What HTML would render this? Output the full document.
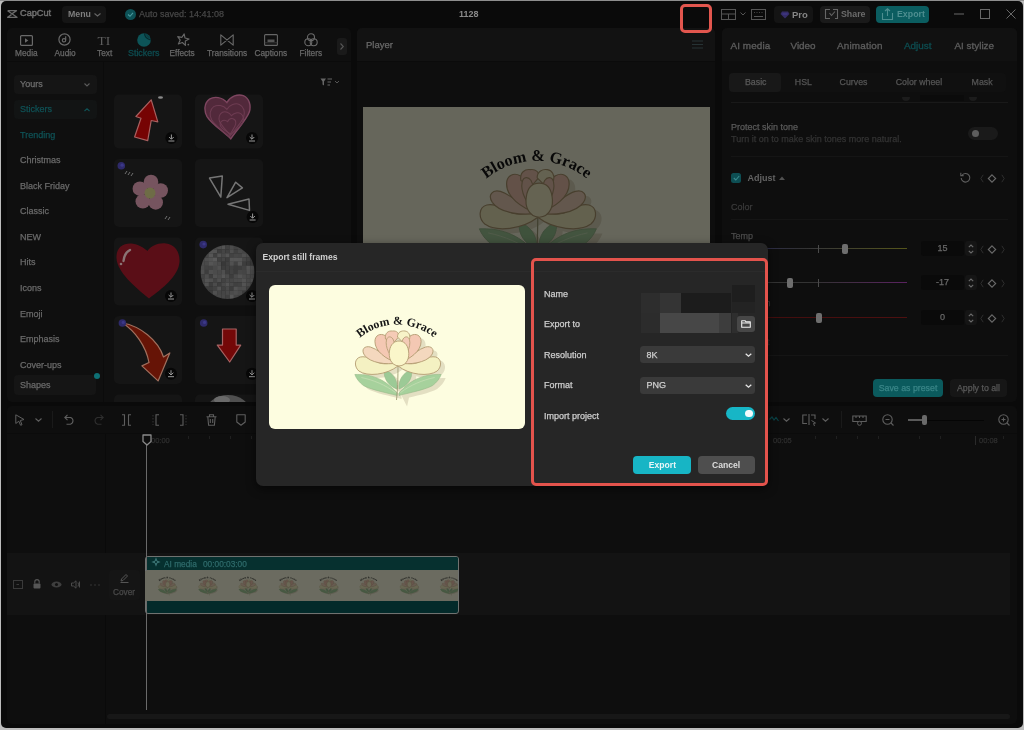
<!DOCTYPE html>
<html><head><meta charset="utf-8">
<style>
*{margin:0;padding:0;box-sizing:border-box}
html,body{width:1024px;height:730px;overflow:hidden;background:#bdbdbd;font-family:"Liberation Sans",sans-serif;position:relative}
.a{position:absolute}
#win{position:absolute;left:1px;top:1px;width:1022px;height:727px;background:#0a0a0a;border-radius:5px;overflow:hidden}
.panel{position:absolute;background:#0f0f0f;border-radius:5px;overflow:hidden}
.t{position:absolute;white-space:nowrap;line-height:1;-webkit-text-stroke:0.25px currentColor}
svg{position:absolute;overflow:visible}
</style></head><body><div id="root" style="position:absolute;left:0;top:0;width:1024px;height:730px;will-change:transform;background:#bdbdbd">
<div class="a" style="left:0;top:0;width:1024px;height:1px;background:#8e8e8e"></div><div id="win"></div>

<!-- TOPBAR -->
<div id="top">
 <svg style="left:7px;top:10px" width="11" height="8" viewBox="0 0 11 8"><path d="M0.6 0.7 L9.5 0.7 L5.5 3.4 M0.6 0.7 L10 7.3 L0.6 7.3 L4.5 4.6" stroke="#6a6a6a" stroke-width="1.3" fill="none" stroke-linejoin="round"/></svg>
 <div class="t" style="left:20px;top:8.7px;font-size:9.2px;color:#707070;-webkit-text-stroke:0.45px #707070">CapCut</div>
 <div class="a" style="left:62px;top:6px;width:44px;height:17px;background:#151515;border-radius:4px"></div>
 <div class="t" style="left:68px;top:10px;font-size:8.8px;font-weight:bold;color:#7e7e7e;-webkit-text-stroke:0">Menu</div>
 <svg style="left:94px;top:13px" width="7" height="4" viewBox="0 0 7 4"><path d="M0.5 0.5 L3.5 3 L6.5 0.5" stroke="#666" stroke-width="1.1" fill="none"/></svg>
 <div class="a" style="left:125px;top:9px;width:11px;height:11px;border-radius:50%;background:#0d5257"></div>
 <svg style="left:127px;top:11px" width="7" height="7" viewBox="0 0 7 7"><path d="M1 3.5 L3 5.3 L6 1.8" stroke="#4a9a9e" stroke-width="1.1" fill="none"/></svg>
 <div class="t" style="left:139px;top:10px;font-size:9px;color:#474747">Auto saved: 14:41:08</div>
 <div class="t" style="left:459px;top:10px;font-size:9px;font-weight:bold;color:#8a8a8a;-webkit-text-stroke:0">1128</div>
 <div class="a" style="left:680px;top:4px;width:32px;height:29px;border:3px solid #e2564e;border-radius:5px;z-index:10"></div>
 <svg style="left:721px;top:9px" width="15" height="11" viewBox="0 0 15 11"><rect x="0.5" y="0.5" width="14" height="10" stroke="#555" fill="none"/><path d="M0.5 5 H14.5 M7.5 5 V10.5" stroke="#555" fill="none"/></svg>
 <svg style="left:740px;top:12px" width="6" height="4" viewBox="0 0 6 4"><path d="M0.5 0.5 L3 3 L5.5 0.5" stroke="#555" stroke-width="1" fill="none"/></svg>
 <svg style="left:751px;top:9px" width="15" height="11" viewBox="0 0 15 11"><rect x="0.5" y="0.5" width="14" height="10" stroke="#555" fill="none"/><path d="M3 7.5 H12" stroke="#555" fill="none"/><path d="M3 3.5 H4 M5.5 3.5 H6.5 M8 3.5 H9 M10.5 3.5 H11.5" stroke="#444" fill="none"/></svg>
 <div class="a" style="left:774px;top:6px;width:39px;height:17px;background:#141414;border-radius:4px"></div>
 <svg style="left:780px;top:10.5px" width="10" height="8" viewBox="0 0 10 8"><path d="M2 0.5 H8 L9.5 3 L5 7.5 L0.5 3Z" fill="#342c66"/><path d="M2.5 3 H7.5" stroke="#4a40a0" stroke-width="0.8"/></svg>
 <div class="t" style="left:792px;top:10px;font-size:9.5px;font-weight:bold;color:#858585;-webkit-text-stroke:0">Pro</div>
 <div class="a" style="left:820px;top:6px;width:50px;height:17px;background:#1a1a1a;border-radius:4px"></div>
 <svg style="left:825px;top:9px" width="13" height="11" viewBox="0 0 13 11"><path d="M5 0.5 H0.5 V9.5 H5 M8 0.5 H12.5 V9.5 H10" stroke="#666" stroke-width="1.1" fill="none"/><path d="M4.5 4 L6.5 6.5 L10 2.5" stroke="#666" stroke-width="1.1" fill="none"/></svg>
 <div class="t" style="left:841px;top:10px;font-size:8.8px;font-weight:bold;color:#6c6c6c;-webkit-text-stroke:0">Share</div>
 <div class="a" style="left:876px;top:6px;width:53px;height:17px;background:#0b5d60;border-radius:4px"></div>
 <svg style="left:882px;top:8px" width="11" height="12" viewBox="0 0 11 12"><path d="M0.5 5 V11.5 H10.5 V5 M5.5 8 V0.8 M3 3 L5.5 0.8 L8 3" stroke="#4e8e90" stroke-width="1.1" fill="none"/></svg>
 <div class="t" style="left:897px;top:10px;font-size:8.8px;font-weight:bold;color:#4e8e90;-webkit-text-stroke:0">Export</div>
 <svg style="left:954px;top:13px" width="10" height="2" viewBox="0 0 10 2"><path d="M0 1 H10" stroke="#686868" stroke-width="1"/></svg>
 <svg style="left:980px;top:9px" width="10" height="10" viewBox="0 0 10 10"><rect x="0.5" y="0.5" width="9" height="9" stroke="#686868" stroke-width="1" fill="none"/></svg>
 <svg style="left:1006px;top:9px" width="10" height="10" viewBox="0 0 10 10"><path d="M0.5 0.5 L9.5 9.5 M9.5 0.5 L0.5 9.5" stroke="#686868" stroke-width="1"/></svg>
</div>

<!-- LEFT PANEL -->
<div class="panel" style="left:7px;top:28px;width:344px;height:374px">
 <!-- tabs -->
 <svg style="left:13px;top:7px" width="13" height="11" viewBox="0 0 13 11"><rect x="0.6" y="0.6" width="11.8" height="9.8" rx="1" stroke="#6a6a6a" stroke-width="1.2" fill="none"/><path d="M5 3.2 L8.3 5.5 L5 7.8Z" fill="#6a6a6a"/></svg>
 <div class="t" style="left:8px;top:21px;font-size:8.3px;color:#686868">Media</div>
 <svg style="left:51px;top:5px" width="13" height="13" viewBox="0 0 13 13"><circle cx="6.5" cy="6.5" r="5.6" stroke="#6a6a6a" stroke-width="1.2" fill="none"/><circle cx="6" cy="7.3" r="1.7" stroke="#6a6a6a" stroke-width="1.1" fill="none"/><path d="M7.7 7.3 V3.2" stroke="#6a6a6a" stroke-width="1.1"/></svg>
 <div class="t" style="left:47.5px;top:21px;font-size:8.3px;color:#686868">Audio</div>
 <div class="t" style="left:90.5px;top:6px;font-size:13.5px;font-family:'Liberation Serif',serif;color:#5e5e5e;-webkit-text-stroke:0">TI</div>
 <div class="t" style="left:90px;top:21px;font-size:8.3px;color:#686868">Text</div>
 <svg style="left:130px;top:5px" width="14" height="14" viewBox="0 0 14 14"><circle cx="7" cy="7" r="6.8" fill="#0d5458"/><path d="M7.5 0.3 Q8 6 13.8 6.8" stroke="#062a2d" stroke-width="1.3" fill="none"/><path d="M8.5 0.8 Q9.5 5 13.3 5.5 A6.8 6.8 0 0 0 8.5 0.8Z" fill="#0a4044"/></svg>
 <div class="t" style="left:121px;top:20.5px;font-size:8.9px;color:#0d4a4e;-webkit-text-stroke:0.35px #0d4a4e">Stickers</div>
 <svg style="left:169px;top:5px" width="14" height="13" viewBox="0 0 14 13"><g transform="rotate(12 7 6.5)"><path d="M7 0.8 L8.6 4.6 L12.8 4.8 L9.6 7.6 L10.6 11.8 L7 9.6 L3.4 11.8 L4.4 7.6 L1.2 4.8 L5.4 4.6Z" stroke="#666" stroke-width="1.15" fill="none" stroke-linejoin="round"/></g><circle cx="12.3" cy="11.6" r="0.9" fill="#666"/></svg>
 <div class="t" style="left:162.5px;top:21px;font-size:8.3px;color:#686868">Effects</div>
 <svg style="left:213px;top:6px" width="14" height="12" viewBox="0 0 14 12"><path d="M0.8 0.8 L13.2 11.2 V0.8 L0.8 11.2Z" stroke="#6a6a6a" stroke-width="1.1" fill="none" stroke-linejoin="round"/></svg>
 <div class="t" style="left:200px;top:21px;font-size:8.3px;color:#686868">Transitions</div>
 <svg style="left:257px;top:6px" width="14" height="12" viewBox="0 0 14 12"><rect x="0.6" y="0.6" width="12.8" height="10.8" rx="1" stroke="#666" stroke-width="1.1" fill="none"/><rect x="3.5" y="5.5" width="7" height="2.5" fill="#555"/><path d="M0.6 8.8 H13.4" stroke="#444" stroke-width="0.8"/></svg>
 <div class="t" style="left:247.5px;top:21px;font-size:8.3px;color:#686868">Captions</div>
 <svg style="left:297px;top:5px" width="14" height="14" viewBox="0 0 14 14"><circle cx="7" cy="4.3" r="3.5" stroke="#6a6a6a" stroke-width="1.1" fill="none"/><circle cx="4.3" cy="9.2" r="3.5" stroke="#6a6a6a" stroke-width="1.1" fill="none"/><circle cx="9.7" cy="9.2" r="3.5" stroke="#6a6a6a" stroke-width="1.1" fill="none"/></svg>
 <div class="t" style="left:292.5px;top:21px;font-size:8.3px;color:#686868">Filters</div>
 <div class="a" style="left:330px;top:10px;width:10px;height:17px;background:#1a1a1a;border-radius:3px"></div>
 <svg style="left:333px;top:15px" width="4" height="7" viewBox="0 0 4 7"><path d="M0.5 0.5 L3.3 3.5 L0.5 6.5" stroke="#555" stroke-width="1.1" fill="none"/></svg>
 <div class="a" style="left:0;top:33px;width:344px;height:1px;background:#0b0b0b"></div>
 <!-- sidebar -->
 <div class="a" style="left:96px;top:34px;width:1px;height:340px;background:#0b0b0b"></div>
 <div class="a" style="left:7px;top:47px;width:83px;height:19px;background:#151515;border-radius:4px"></div>
 <div class="t" style="left:13px;top:51.5px;font-size:9px;color:#6e6e6e">Yours</div>
 <svg style="left:77px;top:55px" width="6" height="4" viewBox="0 0 6 4"><path d="M0.5 0.5 L3 3 L5.5 0.5" stroke="#5a5a5a" stroke-width="1.1" fill="none"/></svg>
 <div class="a" style="left:7px;top:72px;width:83px;height:19px;background:#121414;border-radius:4px"></div>
 <div class="t" style="left:13px;top:77px;font-size:9px;color:#0f5256">Stickers</div>
 <svg style="left:77px;top:80px" width="6" height="4" viewBox="0 0 6 4"><path d="M0.5 3 L3 0.8 L5.5 3" stroke="#0f5256" stroke-width="1.1" fill="none"/></svg>
 <div class="t" style="left:13px;top:102.5px;font-size:9px;color:#0f5256">Trending</div>
 <div class="t" style="left:13px;top:128px;font-size:9px;color:#6a6a6a">Christmas</div>
 <div class="t" style="left:13px;top:153.6px;font-size:9px;color:#6a6a6a">Black Friday</div>
 <div class="t" style="left:13px;top:179.2px;font-size:9px;color:#6a6a6a">Classic</div>
 <div class="t" style="left:13px;top:204.8px;font-size:9px;color:#6a6a6a">NEW</div>
 <div class="t" style="left:13px;top:230.4px;font-size:9px;color:#6a6a6a">Hits</div>
 <div class="t" style="left:13px;top:256px;font-size:9px;color:#6a6a6a">Icons</div>
 <div class="t" style="left:13px;top:281.6px;font-size:9px;color:#6a6a6a">Emoji</div>
 <div class="t" style="left:13px;top:307.2px;font-size:9px;color:#6a6a6a">Emphasis</div>
 <div class="a" style="left:0;top:330px;width:98px;height:14px;overflow:hidden"><div class="t" style="left:13px;top:2.8px;font-size:9px;color:#6a6a6a">Cover-ups</div></div>
 <div class="a" style="left:7px;top:347px;width:82px;height:20px;background:#151515;border-radius:4px"></div>
 <div class="t" style="left:13px;top:352.5px;font-size:9px;color:#6a6a6a">Shapes</div>
 <div class="a" style="left:87px;top:345px;width:6px;height:6px;border-radius:50%;background:#0e7074"></div>
 <!-- filter icon -->
 <svg style="left:313px;top:50px" width="20" height="8" viewBox="0 0 20 8"><path d="M0.5 0.5 H6 L4 3.5 V7.5 L2.5 6.5 V3.5Z" fill="#666"/><path d="M7.5 1 H12 M7.5 4 H11 M7.5 7 H10" stroke="#666" stroke-width="1"/><path d="M15 3 L17 5 L19 3" stroke="#555" stroke-width="1" fill="none"/></svg>
 <!-- grid -->
 </div>
<!-- GRID -->
<svg style="left:0;top:0" width="1024" height="730" viewBox="0 0 1024 730"><defs><clipPath id="sph"><circle cx="227.5" cy="272" r="27"/></clipPath><filter id="bl"><feGaussianBlur stdDeviation="0.5"/></filter><clipPath id="gc"><rect x="106" y="94" width="245" height="308"/></clipPath></defs><g clip-path="url(#gc)"><rect x="114" y="94.5" width="68" height="54" rx="5" fill="#151515"/><rect x="195" y="94.5" width="68" height="54" rx="5" fill="#151515"/><rect x="114" y="159" width="68" height="68" rx="5" fill="#151515"/><rect x="195" y="159" width="68" height="68" rx="5" fill="#151515"/><rect x="114" y="237.5" width="68" height="68" rx="5" fill="#151515"/><rect x="195" y="237.5" width="68" height="68" rx="5" fill="#151515"/><rect x="114" y="316" width="68" height="68" rx="5" fill="#151515"/><rect x="195" y="316" width="68" height="68" rx="5" fill="#151515"/><rect x="114" y="394.5" width="68" height="68" rx="5" fill="#151515"/><rect x="195" y="394.5" width="68" height="68" rx="5" fill="#151515"/><path d="M151.2 99.8 L157.8 121.8 L151.2 120.5 L147.7 140.6 L134.6 137 L141 118.3 L135.9 116.5Z" fill="#760303" stroke="#a86060" stroke-width="1.2" stroke-linejoin="round"/><ellipse cx="160.5" cy="97.5" rx="2.5" ry="1.2" fill="#8a8a8a"/><circle cx="171.4" cy="138" r="6" fill="#070707"/><path d="M171.4 134.5 V139 M169.1 137 L171.4 139.3 L173.70000000000002 137 M168.4 141 H174.4" stroke="#9a9a9a" stroke-width="1" fill="none"/><path d="M0 -29 C-5 -36 -14 -38 -20 -35 C-27 -31 -28 -22 -25 -15 C-20 -5 -8 4 0 14 C8 4 20 -5 25 -15 C28 -22 27 -31 20 -35 C14 -38 5 -36 0 -29Z" transform="translate(229.5 127) rotate(-6) scale(0.85)" fill="#52293b" stroke="#7e4660" stroke-width="1.65"/><path d="M0 -29 C-5 -36 -14 -38 -20 -35 C-27 -31 -28 -22 -25 -15 C-20 -5 -8 4 0 14 C8 4 20 -5 25 -15 C28 -22 27 -31 20 -35 C14 -38 5 -36 0 -29Z" transform="translate(228.5 128) rotate(-5) scale(0.644)" fill="none" stroke="#6e3c52" stroke-width="1.57"/><path d="M0 -29 C-5 -36 -14 -38 -20 -35 C-27 -31 -28 -22 -25 -15 C-20 -5 -8 4 0 14 C8 4 20 -5 25 -15 C28 -22 27 -31 20 -35 C14 -38 5 -36 0 -29Z" transform="translate(230.5 129) rotate(4) scale(0.460)" fill="none" stroke="#6e3c52" stroke-width="2.20"/><path d="M0 -29 C-5 -36 -14 -38 -20 -35 C-27 -31 -28 -22 -25 -15 C-20 -5 -8 4 0 14 C8 4 20 -5 25 -15 C28 -22 27 -31 20 -35 C14 -38 5 -36 0 -29Z" transform="translate(229.5 130) rotate(-13) scale(0.294)" fill="none" stroke="#6e3c52" stroke-width="3.44"/><circle cx="252" cy="138" r="6" fill="#070707"/><path d="M252 134.5 V139 M249.7 137 L252 139.3 L254.3 137 M249 141 H255" stroke="#9a9a9a" stroke-width="1" fill="none"/><circle cx="151.0" cy="182.0" r="7.3" fill="#76545f"/><circle cx="160.7" cy="190.5" r="7.3" fill="#76545f"/><circle cx="155.7" cy="202.4" r="7.3" fill="#76545f"/><circle cx="142.8" cy="201.3" r="7.3" fill="#76545f"/><circle cx="139.9" cy="188.7" r="7.3" fill="#76545f"/><circle cx="150" cy="193" r="5.5" fill="#6e6c46"/><circle cx="121.3" cy="165.8" r="3.8" fill="#2e2a6a"/><circle cx="122.1" cy="165.20000000000002" r="1.6" fill="#3c3888"/><path d="M125 174 L127 171 M128 175 L130 172 M131 176 L133 173 M165 219 L167 216 M168 220 L170 217" stroke="#7a7a7a" stroke-width="0.9"/><g stroke="#767676" stroke-width="1.5" fill="none" stroke-linejoin="round"><path d="M209.5 178.1 L222.3 176 L220.8 197.1Z"/><path d="M235.7 182.2 L242.4 187.9 L227 197.6Z"/><path d="M249 199.1 L249.5 210.4 L228 204.3Z"/></g><circle cx="252.6" cy="217" r="6" fill="#070707"/><path d="M252.6 213.5 V218 M250.29999999999998 216 L252.6 218.3 L254.9 216 M249.6 220 H255.6" stroke="#9a9a9a" stroke-width="1" fill="none"/><path d="M149 298.4 C135 287 117 272 116.5 258 C116 247 124 242.5 133 243.8 C140 245 145 249 147.5 251 C151 246 158 242.5 166 243.5 C176 245 180 253 179.5 262 C178.5 276 162 289 149 298.4Z" fill="#5a0e17"/><path d="M130 250 C126 252 124 256 123.5 261" stroke="#8a7474" stroke-width="2.4" fill="none" stroke-linecap="round"/><circle cx="121" cy="264" r="1.3" fill="#8a7474"/><circle cx="171" cy="296" r="6" fill="#070707"/><path d="M171 292.5 V297 M168.7 295 L171 297.3 L173.3 295 M168 299 H174" stroke="#9a9a9a" stroke-width="1" fill="none"/><g clip-path="url(#sph)" filter="url(#bl)"><rect x="200.5" y="245.0" width="4.35" height="4.35" fill="rgb(79,79,79)"/><rect x="200.5" y="249.2" width="4.35" height="4.35" fill="rgb(82,82,82)"/><rect x="200.5" y="253.3" width="4.35" height="4.35" fill="rgb(87,87,87)"/><rect x="200.5" y="257.5" width="4.35" height="4.35" fill="rgb(77,77,77)"/><rect x="200.5" y="261.6" width="4.35" height="4.35" fill="rgb(76,76,76)"/><rect x="200.5" y="265.8" width="4.35" height="4.35" fill="rgb(76,76,76)"/><rect x="200.5" y="269.9" width="4.35" height="4.35" fill="rgb(79,79,79)"/><rect x="200.5" y="274.1" width="4.35" height="4.35" fill="rgb(67,67,67)"/><rect x="200.5" y="278.2" width="4.35" height="4.35" fill="rgb(69,69,69)"/><rect x="200.5" y="282.4" width="4.35" height="4.35" fill="rgb(79,79,79)"/><rect x="200.5" y="286.5" width="4.35" height="4.35" fill="rgb(80,80,80)"/><rect x="200.5" y="290.7" width="4.35" height="4.35" fill="rgb(84,84,84)"/><rect x="200.5" y="294.8" width="4.35" height="4.35" fill="rgb(87,87,87)"/><rect x="204.7" y="245.0" width="4.35" height="4.35" fill="rgb(91,91,91)"/><rect x="204.7" y="249.2" width="4.35" height="4.35" fill="rgb(71,71,71)"/><rect x="204.7" y="253.3" width="4.35" height="4.35" fill="rgb(68,68,68)"/><rect x="204.7" y="257.5" width="4.35" height="4.35" fill="rgb(79,79,79)"/><rect x="204.7" y="261.6" width="4.35" height="4.35" fill="rgb(72,72,72)"/><rect x="204.7" y="265.8" width="4.35" height="4.35" fill="rgb(66,66,66)"/><rect x="204.7" y="269.9" width="4.35" height="4.35" fill="rgb(62,62,62)"/><rect x="204.7" y="274.1" width="4.35" height="4.35" fill="rgb(78,78,78)"/><rect x="204.7" y="278.2" width="4.35" height="4.35" fill="rgb(83,83,83)"/><rect x="204.7" y="282.4" width="4.35" height="4.35" fill="rgb(81,81,81)"/><rect x="204.7" y="286.5" width="4.35" height="4.35" fill="rgb(61,61,61)"/><rect x="204.7" y="290.7" width="4.35" height="4.35" fill="rgb(79,79,79)"/><rect x="204.7" y="294.8" width="4.35" height="4.35" fill="rgb(75,75,75)"/><rect x="208.8" y="245.0" width="4.35" height="4.35" fill="rgb(79,79,79)"/><rect x="208.8" y="249.2" width="4.35" height="4.35" fill="rgb(83,83,83)"/><rect x="208.8" y="253.3" width="4.35" height="4.35" fill="rgb(87,87,87)"/><rect x="208.8" y="257.5" width="4.35" height="4.35" fill="rgb(83,83,83)"/><rect x="208.8" y="261.6" width="4.35" height="4.35" fill="rgb(84,84,84)"/><rect x="208.8" y="265.8" width="4.35" height="4.35" fill="rgb(66,66,66)"/><rect x="208.8" y="269.9" width="4.35" height="4.35" fill="rgb(79,79,79)"/><rect x="208.8" y="274.1" width="4.35" height="4.35" fill="rgb(62,62,62)"/><rect x="208.8" y="278.2" width="4.35" height="4.35" fill="rgb(79,79,79)"/><rect x="208.8" y="282.4" width="4.35" height="4.35" fill="rgb(62,62,62)"/><rect x="208.8" y="286.5" width="4.35" height="4.35" fill="rgb(61,61,61)"/><rect x="208.8" y="290.7" width="4.35" height="4.35" fill="rgb(59,59,59)"/><rect x="208.8" y="294.8" width="4.35" height="4.35" fill="rgb(67,67,67)"/><rect x="213.0" y="245.0" width="4.35" height="4.35" fill="rgb(70,70,70)"/><rect x="213.0" y="249.2" width="4.35" height="4.35" fill="rgb(82,82,82)"/><rect x="213.0" y="253.3" width="4.35" height="4.35" fill="rgb(65,65,65)"/><rect x="213.0" y="257.5" width="4.35" height="4.35" fill="rgb(90,90,90)"/><rect x="213.0" y="261.6" width="4.35" height="4.35" fill="rgb(79,79,79)"/><rect x="213.0" y="265.8" width="4.35" height="4.35" fill="rgb(74,74,74)"/><rect x="213.0" y="269.9" width="4.35" height="4.35" fill="rgb(76,76,76)"/><rect x="213.0" y="274.1" width="4.35" height="4.35" fill="rgb(81,81,81)"/><rect x="213.0" y="278.2" width="4.35" height="4.35" fill="rgb(66,66,66)"/><rect x="213.0" y="282.4" width="4.35" height="4.35" fill="rgb(76,76,76)"/><rect x="213.0" y="286.5" width="4.35" height="4.35" fill="rgb(66,66,66)"/><rect x="213.0" y="290.7" width="4.35" height="4.35" fill="rgb(79,79,79)"/><rect x="213.0" y="294.8" width="4.35" height="4.35" fill="rgb(68,68,68)"/><rect x="217.1" y="245.0" width="4.35" height="4.35" fill="rgb(77,77,77)"/><rect x="217.1" y="249.2" width="4.35" height="4.35" fill="rgb(62,62,62)"/><rect x="217.1" y="253.3" width="4.35" height="4.35" fill="rgb(82,82,82)"/><rect x="217.1" y="257.5" width="4.35" height="4.35" fill="rgb(63,63,63)"/><rect x="217.1" y="261.6" width="4.35" height="4.35" fill="rgb(75,75,75)"/><rect x="217.1" y="265.8" width="4.35" height="4.35" fill="rgb(81,81,81)"/><rect x="217.1" y="269.9" width="4.35" height="4.35" fill="rgb(72,72,72)"/><rect x="217.1" y="274.1" width="4.35" height="4.35" fill="rgb(76,76,76)"/><rect x="217.1" y="278.2" width="4.35" height="4.35" fill="rgb(80,80,80)"/><rect x="217.1" y="282.4" width="4.35" height="4.35" fill="rgb(62,62,62)"/><rect x="217.1" y="286.5" width="4.35" height="4.35" fill="rgb(83,83,83)"/><rect x="217.1" y="290.7" width="4.35" height="4.35" fill="rgb(69,69,69)"/><rect x="217.1" y="294.8" width="4.35" height="4.35" fill="rgb(71,71,71)"/><rect x="221.3" y="245.0" width="4.35" height="4.35" fill="rgb(82,82,82)"/><rect x="221.3" y="249.2" width="4.35" height="4.35" fill="rgb(68,68,68)"/><rect x="221.3" y="253.3" width="4.35" height="4.35" fill="rgb(74,74,74)"/><rect x="221.3" y="257.5" width="4.35" height="4.35" fill="rgb(69,69,69)"/><rect x="221.3" y="261.6" width="4.35" height="4.35" fill="rgb(57,57,57)"/><rect x="221.3" y="265.8" width="4.35" height="4.35" fill="rgb(60,60,60)"/><rect x="221.3" y="269.9" width="4.35" height="4.35" fill="rgb(80,80,80)"/><rect x="221.3" y="274.1" width="4.35" height="4.35" fill="rgb(87,87,87)"/><rect x="221.3" y="278.2" width="4.35" height="4.35" fill="rgb(66,66,66)"/><rect x="221.3" y="282.4" width="4.35" height="4.35" fill="rgb(74,74,74)"/><rect x="221.3" y="286.5" width="4.35" height="4.35" fill="rgb(64,64,64)"/><rect x="221.3" y="290.7" width="4.35" height="4.35" fill="rgb(69,69,69)"/><rect x="221.3" y="294.8" width="4.35" height="4.35" fill="rgb(71,71,71)"/><rect x="225.4" y="245.0" width="4.35" height="4.35" fill="rgb(63,63,63)"/><rect x="225.4" y="249.2" width="4.35" height="4.35" fill="rgb(63,63,63)"/><rect x="225.4" y="253.3" width="4.35" height="4.35" fill="rgb(83,83,83)"/><rect x="225.4" y="257.5" width="4.35" height="4.35" fill="rgb(61,61,61)"/><rect x="225.4" y="261.6" width="4.35" height="4.35" fill="rgb(65,65,65)"/><rect x="225.4" y="265.8" width="4.35" height="4.35" fill="rgb(64,64,64)"/><rect x="225.4" y="269.9" width="4.35" height="4.35" fill="rgb(61,61,61)"/><rect x="225.4" y="274.1" width="4.35" height="4.35" fill="rgb(75,75,75)"/><rect x="225.4" y="278.2" width="4.35" height="4.35" fill="rgb(74,74,74)"/><rect x="225.4" y="282.4" width="4.35" height="4.35" fill="rgb(82,82,82)"/><rect x="225.4" y="286.5" width="4.35" height="4.35" fill="rgb(73,73,73)"/><rect x="225.4" y="290.7" width="4.35" height="4.35" fill="rgb(72,72,72)"/><rect x="225.4" y="294.8" width="4.35" height="4.35" fill="rgb(64,64,64)"/><rect x="229.6" y="245.0" width="4.35" height="4.35" fill="rgb(76,76,76)"/><rect x="229.6" y="249.2" width="4.35" height="4.35" fill="rgb(79,79,79)"/><rect x="229.6" y="253.3" width="4.35" height="4.35" fill="rgb(67,67,67)"/><rect x="229.6" y="257.5" width="4.35" height="4.35" fill="rgb(87,87,87)"/><rect x="229.6" y="261.6" width="4.35" height="4.35" fill="rgb(81,81,81)"/><rect x="229.6" y="265.8" width="4.35" height="4.35" fill="rgb(65,65,65)"/><rect x="229.6" y="269.9" width="4.35" height="4.35" fill="rgb(67,67,67)"/><rect x="229.6" y="274.1" width="4.35" height="4.35" fill="rgb(61,61,61)"/><rect x="229.6" y="278.2" width="4.35" height="4.35" fill="rgb(71,71,71)"/><rect x="229.6" y="282.4" width="4.35" height="4.35" fill="rgb(72,72,72)"/><rect x="229.6" y="286.5" width="4.35" height="4.35" fill="rgb(62,62,62)"/><rect x="229.6" y="290.7" width="4.35" height="4.35" fill="rgb(75,75,75)"/><rect x="229.6" y="294.8" width="4.35" height="4.35" fill="rgb(86,86,86)"/><rect x="233.7" y="245.0" width="4.35" height="4.35" fill="rgb(66,66,66)"/><rect x="233.7" y="249.2" width="4.35" height="4.35" fill="rgb(64,64,64)"/><rect x="233.7" y="253.3" width="4.35" height="4.35" fill="rgb(71,71,71)"/><rect x="233.7" y="257.5" width="4.35" height="4.35" fill="rgb(87,87,87)"/><rect x="233.7" y="261.6" width="4.35" height="4.35" fill="rgb(67,67,67)"/><rect x="233.7" y="265.8" width="4.35" height="4.35" fill="rgb(59,59,59)"/><rect x="233.7" y="269.9" width="4.35" height="4.35" fill="rgb(59,59,59)"/><rect x="233.7" y="274.1" width="4.35" height="4.35" fill="rgb(75,75,75)"/><rect x="233.7" y="278.2" width="4.35" height="4.35" fill="rgb(75,75,75)"/><rect x="233.7" y="282.4" width="4.35" height="4.35" fill="rgb(65,65,65)"/><rect x="233.7" y="286.5" width="4.35" height="4.35" fill="rgb(82,82,82)"/><rect x="233.7" y="290.7" width="4.35" height="4.35" fill="rgb(80,80,80)"/><rect x="233.7" y="294.8" width="4.35" height="4.35" fill="rgb(69,69,69)"/><rect x="237.9" y="245.0" width="4.35" height="4.35" fill="rgb(71,71,71)"/><rect x="237.9" y="249.2" width="4.35" height="4.35" fill="rgb(74,74,74)"/><rect x="237.9" y="253.3" width="4.35" height="4.35" fill="rgb(68,68,68)"/><rect x="237.9" y="257.5" width="4.35" height="4.35" fill="rgb(85,85,85)"/><rect x="237.9" y="261.6" width="4.35" height="4.35" fill="rgb(84,84,84)"/><rect x="237.9" y="265.8" width="4.35" height="4.35" fill="rgb(60,60,60)"/><rect x="237.9" y="269.9" width="4.35" height="4.35" fill="rgb(71,71,71)"/><rect x="237.9" y="274.1" width="4.35" height="4.35" fill="rgb(83,83,83)"/><rect x="237.9" y="278.2" width="4.35" height="4.35" fill="rgb(75,75,75)"/><rect x="237.9" y="282.4" width="4.35" height="4.35" fill="rgb(67,67,67)"/><rect x="237.9" y="286.5" width="4.35" height="4.35" fill="rgb(75,75,75)"/><rect x="237.9" y="290.7" width="4.35" height="4.35" fill="rgb(74,74,74)"/><rect x="237.9" y="294.8" width="4.35" height="4.35" fill="rgb(64,64,64)"/><rect x="242.0" y="245.0" width="4.35" height="4.35" fill="rgb(58,58,58)"/><rect x="242.0" y="249.2" width="4.35" height="4.35" fill="rgb(68,68,68)"/><rect x="242.0" y="253.3" width="4.35" height="4.35" fill="rgb(80,80,80)"/><rect x="242.0" y="257.5" width="4.35" height="4.35" fill="rgb(71,71,71)"/><rect x="242.0" y="261.6" width="4.35" height="4.35" fill="rgb(61,61,61)"/><rect x="242.0" y="265.8" width="4.35" height="4.35" fill="rgb(67,67,67)"/><rect x="242.0" y="269.9" width="4.35" height="4.35" fill="rgb(68,68,68)"/><rect x="242.0" y="274.1" width="4.35" height="4.35" fill="rgb(76,76,76)"/><rect x="242.0" y="278.2" width="4.35" height="4.35" fill="rgb(82,82,82)"/><rect x="242.0" y="282.4" width="4.35" height="4.35" fill="rgb(82,82,82)"/><rect x="242.0" y="286.5" width="4.35" height="4.35" fill="rgb(77,77,77)"/><rect x="242.0" y="290.7" width="4.35" height="4.35" fill="rgb(59,59,59)"/><rect x="242.0" y="294.8" width="4.35" height="4.35" fill="rgb(55,55,55)"/><rect x="246.2" y="245.0" width="4.35" height="4.35" fill="rgb(61,61,61)"/><rect x="246.2" y="249.2" width="4.35" height="4.35" fill="rgb(67,67,67)"/><rect x="246.2" y="253.3" width="4.35" height="4.35" fill="rgb(76,76,76)"/><rect x="246.2" y="257.5" width="4.35" height="4.35" fill="rgb(66,66,66)"/><rect x="246.2" y="261.6" width="4.35" height="4.35" fill="rgb(58,58,58)"/><rect x="246.2" y="265.8" width="4.35" height="4.35" fill="rgb(84,84,84)"/><rect x="246.2" y="269.9" width="4.35" height="4.35" fill="rgb(82,82,82)"/><rect x="246.2" y="274.1" width="4.35" height="4.35" fill="rgb(73,73,73)"/><rect x="246.2" y="278.2" width="4.35" height="4.35" fill="rgb(73,73,73)"/><rect x="246.2" y="282.4" width="4.35" height="4.35" fill="rgb(75,75,75)"/><rect x="246.2" y="286.5" width="4.35" height="4.35" fill="rgb(62,62,62)"/><rect x="246.2" y="290.7" width="4.35" height="4.35" fill="rgb(59,59,59)"/><rect x="246.2" y="294.8" width="4.35" height="4.35" fill="rgb(59,59,59)"/><rect x="250.3" y="245.0" width="4.35" height="4.35" fill="rgb(65,65,65)"/><rect x="250.3" y="249.2" width="4.35" height="4.35" fill="rgb(80,80,80)"/><rect x="250.3" y="253.3" width="4.35" height="4.35" fill="rgb(82,82,82)"/><rect x="250.3" y="257.5" width="4.35" height="4.35" fill="rgb(65,65,65)"/><rect x="250.3" y="261.6" width="4.35" height="4.35" fill="rgb(59,59,59)"/><rect x="250.3" y="265.8" width="4.35" height="4.35" fill="rgb(81,81,81)"/><rect x="250.3" y="269.9" width="4.35" height="4.35" fill="rgb(77,77,77)"/><rect x="250.3" y="274.1" width="4.35" height="4.35" fill="rgb(75,75,75)"/><rect x="250.3" y="278.2" width="4.35" height="4.35" fill="rgb(82,82,82)"/><rect x="250.3" y="282.4" width="4.35" height="4.35" fill="rgb(74,74,74)"/><rect x="250.3" y="286.5" width="4.35" height="4.35" fill="rgb(62,62,62)"/><rect x="250.3" y="290.7" width="4.35" height="4.35" fill="rgb(75,75,75)"/><rect x="250.3" y="294.8" width="4.35" height="4.35" fill="rgb(74,74,74)"/></g><circle cx="203.2" cy="244.6" r="3.8" fill="#2e2a6a"/><circle cx="204.0" cy="244.0" r="1.6" fill="#3c3888"/><circle cx="252" cy="296" r="6" fill="#070707"/><path d="M252 292.5 V297 M249.7 295 L252 297.3 L254.3 295 M249 299 H255" stroke="#9a9a9a" stroke-width="1" fill="none"/><path d="M122.5 323 C140 326 158 340 163.5 357 L169.8 352.9 L158.1 380.9 L141.9 365.9 L149 362.5 C146 346 135 331 122.5 323Z" fill="#661406" stroke="#a0705e" stroke-width="1.2" stroke-linejoin="round"/><circle cx="122.4" cy="323" r="3.8" fill="#2e2a6a"/><circle cx="123.2" cy="322.4" r="1.6" fill="#3c3888"/><circle cx="171" cy="373.7" r="6" fill="#070707"/><path d="M171 370.2 V374.7 M168.7 372.7 L171 375.0 L173.3 372.7 M168 376.7 H174" stroke="#9a9a9a" stroke-width="1" fill="none"/><path d="M222.5 329 H236.2 V345.1 H240.7 L229.7 362 L217.3 345.1 H222.5Z" fill="#740808" stroke="#a86464" stroke-width="1.2" stroke-linejoin="round"/><circle cx="203.7" cy="323" r="3.8" fill="#2e2a6a"/><circle cx="204.5" cy="322.4" r="1.6" fill="#3c3888"/><circle cx="252" cy="373.7" r="6" fill="#070707"/><path d="M252 370.2 V374.7 M249.7 372.7 L252 375.0 L254.3 372.7 M249 376.7 H255" stroke="#9a9a9a" stroke-width="1" fill="none"/><ellipse cx="228" cy="412" rx="22" ry="17" fill="#505050"/><ellipse cx="222" cy="400" rx="8" ry="4" fill="#6a6a6a"/></g></svg>

<!-- PLAYER -->
<div class="panel" style="left:357px;top:28px;width:358px;height:374px;background:#0e0e0e">
 <div class="a" style="left:0;top:0;width:358px;height:33px;background:#121212"></div>
 <div class="a" style="left:0;top:33px;width:358px;height:1px;background:#0b0b0b"></div>
 <div class="t" style="left:9px;top:12px;font-size:9.5px;color:#6a6a6a">Player</div>
 <svg style="left:335px;top:12px" width="11" height="9" viewBox="0 0 11 9"><path d="M0 1 H11 M0 4.5 H11 M0 8 H11" stroke="#263234" stroke-width="1"/></svg>
 <div class="a" style="left:6px;top:79px;width:347px;height:196px;background:#fdfde2;overflow:hidden"><svg width="347" height="196" viewBox="0 0 255 144" style="left:0;top:0"><defs><path id="arc2" d="M82.5 60.6 A58.8 58.8 0 0 1 172.5 60.6"/></defs><text font-family="Liberation Serif" font-weight="bold" font-size="11.9" fill="#161616" text-anchor="middle"><textPath href="#arc2" startOffset="50%">Bloom &amp; Grace</textPath></text><g transform="translate(4.5,3.5)" fill="#e3dfc2"><path d="M85.5 89.5 C99 89 114 92 127.5 108 L127.5 110.5 C116 107.5 101 104.5 94 100.5 C90 97.5 87 93.5 85.5 89.5Z"/><path d="M 171.50 89.50 C 158.00 89.00 143.00 92.00 129.50 108.00 L 129.50 110.50 C 141.00 107.50 156.00 104.50 163.00 100.50 C 167.00 97.50 170.00 93.50 171.50 89.50 Z"/><path d="M127.5 104 C119 101 113.5 93 115 85 C123 87 128.5 95 127.5 104Z"/><path d="M 129.50 104.00 C 138.00 101.00 143.50 93.00 142.00 85.00 C 134.00 87.00 128.50 95.00 129.50 104.00 Z"/><path d="M128.5 81 C117 90 98 92 89.5 86 C84.5 81.5 85 73.5 91 72 C98 70.5 104 76 110 78 C117 80 124 78 128.5 74Z"/><path d="M 128.50 81.00 C 140.00 90.00 159.00 92.00 167.50 86.00 C 172.50 81.50 172.00 73.50 166.00 72.00 C 159.00 70.50 153.00 76.00 147.00 78.00 C 140.00 80.00 133.00 78.00 128.50 74.00 Z"/><path d="M128.5 78 C117 80 100.5 78 95 70 C91.5 64.5 95 60.5 101 62 C108 64 113 70 119 72.5 C123 74 126 73 128.5 71Z"/><path d="M 128.50 78.00 C 140.00 80.00 156.50 78.00 162.00 70.00 C 165.50 64.50 162.00 60.50 156.00 62.00 C 149.00 64.00 144.00 70.00 138.00 72.50 C 134.00 74.00 131.00 73.00 128.50 71.00 Z"/><path d="M128 78 C116 74 105.5 66 105.5 56.5 C105.5 50 111 48 115.5 50.5 C121.5 54 124.5 63 128 71Z"/><path d="M 129.00 78.00 C 141.00 74.00 151.50 66.00 151.50 56.50 C 151.50 50.00 146.00 48.00 141.50 50.50 C 135.50 54.00 132.50 63.00 129.00 71.00 Z"/><path d="M116 54 C115 48 119 45.5 123 46 C127 45.5 130 48 129 52 L124 58Z"/><path d="M128 52 C128 47 132 45.5 135.5 46 C139 46.5 141 50 140 54 L134 58Z"/><path d="M128 78 C120 71.5 115.5 62 117 55 C118 51 121.5 51 123.5 54 C126 59 127 67 128.5 73Z"/><path d="M 129.00 78.00 C 137.00 71.50 141.50 62.00 140.00 55.00 C 139.00 51.00 135.50 51.00 133.50 54.00 C 131.00 59.00 130.00 67.00 128.50 73.00 Z"/><path d="M129.5 81 C121 80.5 119 72 120 66 C121 59 125 56 129.5 56 C134 56 138 59 139 66 C140 72 138 80.5 129.5 81Z"/><path d="M124 100 L137 100 L133 118Z"/></g><path d="M85.5 89.5 C99 89 114 92 127.5 108 L127.5 110.5 C116 107.5 101 104.5 94 100.5 C90 97.5 87 93.5 85.5 89.5Z" fill="#a6d19c" stroke="#95b888" stroke-width="0.6" stroke-linejoin="round"/><path d="M 171.50 89.50 C 158.00 89.00 143.00 92.00 129.50 108.00 L 129.50 110.50 C 141.00 107.50 156.00 104.50 163.00 100.50 C 167.00 97.50 170.00 93.50 171.50 89.50 Z" fill="#a6d19c" stroke="#95b888" stroke-width="0.6" stroke-linejoin="round"/><path d="M127.5 104 C119 101 113.5 93 115 85 C123 87 128.5 95 127.5 104Z" fill="#9cca96" stroke="#95b888" stroke-width="0.6" stroke-linejoin="round"/><path d="M 129.50 104.00 C 138.00 101.00 143.50 93.00 142.00 85.00 C 134.00 87.00 128.50 95.00 129.50 104.00 Z" fill="#9cca96" stroke="#95b888" stroke-width="0.6" stroke-linejoin="round"/><path d="M128.5 70 C128.5 88 128.5 102 127 115" stroke="#9e9c74" stroke-width="0.9" fill="none"/><path d="M92 92.5 C104 95 116 100 126 107.5 M165 92.5 C153 95 141 100 131 107.5" stroke="#c8dfb6" stroke-width="0.7" fill="none"/><path d="M128.5 81 C117 90 98 92 89.5 86 C84.5 81.5 85 73.5 91 72 C98 70.5 104 76 110 78 C117 80 124 78 128.5 74Z" fill="#f4f1c2" stroke="#b39c72" stroke-width="0.9" stroke-linejoin="round"/><path d="M 128.50 81.00 C 140.00 90.00 159.00 92.00 167.50 86.00 C 172.50 81.50 172.00 73.50 166.00 72.00 C 159.00 70.50 153.00 76.00 147.00 78.00 C 140.00 80.00 133.00 78.00 128.50 74.00 Z" fill="#f4f1c2" stroke="#b39c72" stroke-width="0.9" stroke-linejoin="round"/><path d="M128.5 78 C117 80 100.5 78 95 70 C91.5 64.5 95 60.5 101 62 C108 64 113 70 119 72.5 C123 74 126 73 128.5 71Z" fill="#f4d8be" stroke="#b39c72" stroke-width="0.9" stroke-linejoin="round"/><path d="M 128.50 78.00 C 140.00 80.00 156.50 78.00 162.00 70.00 C 165.50 64.50 162.00 60.50 156.00 62.00 C 149.00 64.00 144.00 70.00 138.00 72.50 C 134.00 74.00 131.00 73.00 128.50 71.00 Z" fill="#f4d8be" stroke="#b39c72" stroke-width="0.9" stroke-linejoin="round"/><path d="M128 78 C116 74 105.5 66 105.5 56.5 C105.5 50 111 48 115.5 50.5 C121.5 54 124.5 63 128 71Z" fill="#f4c8b3" stroke="#b39c72" stroke-width="0.9" stroke-linejoin="round"/><path d="M 129.00 78.00 C 141.00 74.00 151.50 66.00 151.50 56.50 C 151.50 50.00 146.00 48.00 141.50 50.50 C 135.50 54.00 132.50 63.00 129.00 71.00 Z" fill="#f4c8b3" stroke="#b39c72" stroke-width="0.9" stroke-linejoin="round"/><path d="M116 54 C115 48 119 45.5 123 46 C127 45.5 130 48 129 52 L124 58Z" fill="#f5cbb6" stroke="#b39c72" stroke-width="0.85" stroke-linejoin="round"/><path d="M128 52 C128 47 132 45.5 135.5 46 C139 46.5 141 50 140 54 L134 58Z" fill="#f7f3c8" stroke="#b39c72" stroke-width="0.85" stroke-linejoin="round"/><path d="M128 78 C120 71.5 115.5 62 117 55 C118 51 121.5 51 123.5 54 C126 59 127 67 128.5 73Z" fill="#f3cbb6" stroke="#b39c72" stroke-width="0.85" stroke-linejoin="round"/><path d="M 129.00 78.00 C 137.00 71.50 141.50 62.00 140.00 55.00 C 139.00 51.00 135.50 51.00 133.50 54.00 C 131.00 59.00 130.00 67.00 128.50 73.00 Z" fill="#f3cbb6" stroke="#b39c72" stroke-width="0.85" stroke-linejoin="round"/><path d="M129.5 81 C121 80.5 119 72 120 66 C121 59 125 56 129.5 56 C134 56 138 59 139 66 C140 72 138 80.5 129.5 81Z" fill="#faf6ca" stroke="#b39c72" stroke-width="0.9" stroke-linejoin="round"/></svg><div class="a" style="left:0;top:0;width:347px;height:196px;background:rgba(0,0,0,0.595)"></div></div>
</div>

<!-- RIGHT PANEL -->
<div class="panel" style="left:722px;top:28px;width:295px;height:374px;background:#0e0e0e">
 <div class="a" style="left:0;top:0;width:295px;height:33px;background:#111111"></div>
 <div class="t" style="left:8.5px;top:12.9px;font-size:9.9px;color:#5c5c5c;letter-spacing:0.1px;-webkit-text-stroke:0.35px currentColor">AI media</div>
 <div class="t" style="left:68.5px;top:12.9px;font-size:9.9px;color:#5c5c5c;-webkit-text-stroke:0.35px currentColor">Video</div>
 <div class="t" style="left:115px;top:12.9px;font-size:9.9px;color:#5c5c5c;letter-spacing:0.2px;-webkit-text-stroke:0.35px currentColor">Animation</div>
 <div class="t" style="left:182px;top:12.9px;font-size:9.9px;color:#0d4c50;-webkit-text-stroke:0.35px currentColor">Adjust</div>
 <div class="t" style="left:232.5px;top:12.9px;font-size:9.9px;color:#5c5c5c;-webkit-text-stroke:0.35px currentColor">AI stylize</div>
 <div class="a" style="left:7px;top:44.5px;width:277px;height:19.5px;background:#101010;border-radius:4px"></div>
 <div class="a" style="left:7px;top:44.5px;width:52px;height:19.5px;background:#181818;border-radius:4px"></div>
 <div class="t" style="left:23px;top:50px;font-size:8.8px;color:#5a5a5a">Basic</div>
 <div class="t" style="left:72.8px;top:50px;font-size:8.8px;color:#555">HSL</div>
 <div class="t" style="left:117.6px;top:50px;font-size:8.8px;color:#555">Curves</div>
 <div class="t" style="left:173.7px;top:50px;font-size:8.8px;color:#555">Color wheel</div>
 <div class="t" style="left:249.6px;top:50px;font-size:8.8px;color:#555">Mask</div>
 <!-- scrolled remnants -->
 <div class="a" style="left:9px;top:74px;width:277px;height:1px;background:#191919"></div>
 <div class="a" style="left:180px;top:69px;width:8px;height:4px;background:#1c1c1c;border-radius:0 0 4px 4px"></div>
 <div class="a" style="left:198px;top:67px;width:44px;height:6px;background:#0b0b0b"></div>
 <div class="a" style="left:247px;top:69px;width:8px;height:4px;background:#1c1c1c;border-radius:0 0 4px 4px"></div>
 <div class="t" style="left:9px;top:95px;font-size:9px;color:#5a5a5a">Protect skin tone</div>
 <div class="t" style="left:9px;top:106.5px;font-size:9px;color:#333333">Turn it on to make skin tones more natural.</div>
 <div class="a" style="left:246px;top:98.5px;width:29.5px;height:13px;background:#1a1a1a;border-radius:7px"></div>
 <div class="a" style="left:250px;top:101.5px;width:7px;height:7px;background:#5e5e5e;border-radius:50%"></div>
 <div class="a" style="left:9px;top:127.5px;width:277px;height:1px;background:#151515"></div>
 <div class="a" style="left:9px;top:145px;width:10px;height:10px;background:#0d4e53;border-radius:2.5px"></div>
 <svg style="left:11px;top:147px" width="7" height="6" viewBox="0 0 7 6"><path d="M0.8 3 L2.8 5 L6.2 1" stroke="#3a8a8e" stroke-width="1.1" fill="none"/></svg>
 <div class="t" style="left:25.5px;top:145.5px;font-size:9px;font-weight:bold;color:#636363;-webkit-text-stroke:0">Adjust</div>
 <svg style="left:56.5px;top:148px" width="6" height="4" viewBox="0 0 6 4"><path d="M0 4 L3 0.5 L6 4Z" fill="#505050"/></svg>
 <svg style="left:238px;top:144px" width="11" height="11" viewBox="0 0 11 11"><path d="M2.2 3 A4.3 4.3 0 1 1 1.2 6" stroke="#5e5e5e" stroke-width="1.1" fill="none"/><path d="M0.8 0.8 V3.6 H3.6" stroke="#5e5e5e" stroke-width="1.1" fill="none"/></svg>
  <svg style="left:258px;top:146px" width="25" height="9" viewBox="0 0 25 9"><path d="M3.2 0.8 L0.8 4.5 L3.2 8.2" stroke="#2e2e2e" stroke-width="1" fill="none"/><path d="M12 0.8 L15.7 4.5 L12 8.2 L8.3 4.5Z" stroke="#6a6a6a" stroke-width="1.1" fill="none"/><path d="M21.8 0.8 L24.2 4.5 L21.8 8.2" stroke="#2e2e2e" stroke-width="1" fill="none"/></svg>
 <div class="t" style="left:9px;top:175px;font-size:9px;color:#3a3a3a">Color</div>
 <div class="a" style="left:9px;top:191px;width:277px;height:1px;background:#151515"></div>
 <div class="t" style="left:9px;top:203.5px;font-size:9px;color:#4a4a4a">Temp</div>
 <div class="t" style="left:43.5px;top:271px;font-size:9px;color:#3a3a3a">n</div>
 <div class="t" style="left:45px;top:310px;font-size:9px;color:#2a2a2a">t</div>
 <div class="a" style="left:0;top:219.5px;width:185px;height:1.5px;background:linear-gradient(90deg,#22225a,#333 45%,#383838 50%,#55551a 100%)"></div>
 <div class="a" style="left:96px;top:216.5px;width:1px;height:8px;background:#4a4a4a"></div>
 <div class="a" style="left:119.5px;top:215.5px;width:6px;height:10px;background:#6e6e6e;border-radius:2px"></div>
 <div class="a" style="left:199px;top:213.0px;width:43px;height:15px;background:#0a0a0a;border-radius:3px"></div>
 <div class="t" style="left:199px;top:216.0px;width:43px;text-align:center;font-size:9px;color:#686868">15</div>
 <div class="a" style="left:243px;top:213.0px;width:12px;height:15px;background:#151515;border-radius:3px"></div>
 <svg style="left:246px;top:215.5px" width="6" height="10" viewBox="0 0 6 10"><path d="M0.8 3.2 L3 1 L5.2 3.2 M0.8 6.8 L3 9 L5.2 6.8" stroke="#6a6a6a" stroke-width="1.1" fill="none"/></svg>
 <svg style="left:258px;top:216.5px" width="25" height="9" viewBox="0 0 25 9"><path d="M3.2 0.8 L0.8 4.5 L3.2 8.2" stroke="#2e2e2e" stroke-width="1" fill="none"/><path d="M12 0.8 L15.7 4.5 L12 8.2 L8.3 4.5Z" stroke="#6a6a6a" stroke-width="1.1" fill="none"/><path d="M21.8 0.8 L24.2 4.5 L21.8 8.2" stroke="#2e2e2e" stroke-width="1" fill="none"/></svg>
 <div class="a" style="left:0;top:253.8px;width:185px;height:1.5px;background:linear-gradient(90deg,#333,#333 50%,#5a2260 100%)"></div>
 <div class="a" style="left:96px;top:250.8px;width:1px;height:8px;background:#4a4a4a"></div>
 <div class="a" style="left:65px;top:249.8px;width:6px;height:10px;background:#6e6e6e;border-radius:2px"></div>
 <div class="a" style="left:199px;top:247.3px;width:43px;height:15px;background:#0a0a0a;border-radius:3px"></div>
 <div class="t" style="left:199px;top:250.3px;width:43px;text-align:center;font-size:9px;color:#686868">-17</div>
 <div class="a" style="left:243px;top:247.3px;width:12px;height:15px;background:#151515;border-radius:3px"></div>
 <svg style="left:246px;top:249.8px" width="6" height="10" viewBox="0 0 6 10"><path d="M0.8 3.2 L3 1 L5.2 3.2 M0.8 6.8 L3 9 L5.2 6.8" stroke="#6a6a6a" stroke-width="1.1" fill="none"/></svg>
 <svg style="left:258px;top:250.8px" width="25" height="9" viewBox="0 0 25 9"><path d="M3.2 0.8 L0.8 4.5 L3.2 8.2" stroke="#2e2e2e" stroke-width="1" fill="none"/><path d="M12 0.8 L15.7 4.5 L12 8.2 L8.3 4.5Z" stroke="#6a6a6a" stroke-width="1.1" fill="none"/><path d="M21.8 0.8 L24.2 4.5 L21.8 8.2" stroke="#2e2e2e" stroke-width="1" fill="none"/></svg>
 <div class="a" style="left:0;top:288.5px;width:185px;height:1.5px;background:linear-gradient(90deg,#3e0c0c,#4e1010 100%)"></div>
 <div class="a" style="left:96px;top:285.5px;width:1px;height:8px;background:#4a4a4a"></div>
 <div class="a" style="left:93.7px;top:284.5px;width:6px;height:10px;background:#6e6e6e;border-radius:2px"></div>
 <div class="a" style="left:199px;top:282.0px;width:43px;height:15px;background:#0a0a0a;border-radius:3px"></div>
 <div class="t" style="left:199px;top:285.0px;width:43px;text-align:center;font-size:9px;color:#686868">0</div>
 <div class="a" style="left:243px;top:282.0px;width:12px;height:15px;background:#151515;border-radius:3px"></div>
 <svg style="left:246px;top:284.5px" width="6" height="10" viewBox="0 0 6 10"><path d="M0.8 3.2 L3 1 L5.2 3.2 M0.8 6.8 L3 9 L5.2 6.8" stroke="#6a6a6a" stroke-width="1.1" fill="none"/></svg>
 <svg style="left:258px;top:285.5px" width="25" height="9" viewBox="0 0 25 9"><path d="M3.2 0.8 L0.8 4.5 L3.2 8.2" stroke="#2e2e2e" stroke-width="1" fill="none"/><path d="M12 0.8 L15.7 4.5 L12 8.2 L8.3 4.5Z" stroke="#6a6a6a" stroke-width="1.1" fill="none"/><path d="M21.8 0.8 L24.2 4.5 L21.8 8.2" stroke="#2e2e2e" stroke-width="1" fill="none"/></svg>
 <div class="a" style="left:9px;top:326.5px;width:277px;height:1px;background:#151515"></div>
 <div class="a" style="left:151px;top:351px;width:70px;height:18px;background:#0b5a5d;border-radius:4px"></div>
 <div class="t" style="left:151px;top:355.5px;width:70px;text-align:center;font-size:8.8px;color:#3a8688">Save as preset</div>
 <div class="a" style="left:228px;top:351px;width:57px;height:18px;background:#161616;border-radius:4px"></div>
 <div class="t" style="left:228px;top:355.5px;width:57px;text-align:center;font-size:8.8px;color:#585858">Apply to all</div>
</div>

<!-- TIMELINE -->
<div class="panel" style="left:7px;top:406px;width:1010px;height:318px;background:#0e0e0e">
 <div class="a" style="left:0;top:27px;width:1010px;height:1px;background:#0b0b0b"></div>
 <svg style="left:8px;top:8px" width="10" height="12" viewBox="0 0 10 12"><path d="M0.8 0.8 L9 5.5 L5.3 6.5 L7 10.8 L5.5 11.2 L3.8 7.2 L0.8 9.5Z" stroke="#5e5e5e" stroke-width="1" fill="none" stroke-linejoin="round"/></svg>
 <svg style="left:28px;top:12px" width="7" height="4" viewBox="0 0 7 4"><path d="M0.5 0.5 L3.5 3.2 L6.5 0.5" stroke="#5e5e5e" stroke-width="1.1" fill="none"/></svg>
 <div class="a" style="left:45px;top:5px;width:1px;height:17px;background:#1a1a1a"></div>
 <svg style="left:57px;top:8px" width="11" height="11" viewBox="0 0 11 11"><path d="M3.5 0.8 L0.8 3.5 L3.5 6.2 M0.8 3.5 H6.5 A3.5 3.5 0 0 1 6.5 10.2 H2.5" stroke="#5e5e5e" stroke-width="1.1" fill="none"/></svg>
 <svg style="left:86px;top:8px" width="11" height="11" viewBox="0 0 11 11"><path d="M7.5 0.8 L10.2 3.5 L7.5 6.2 M10.2 3.5 H4.5 A3.5 3.5 0 0 0 4.5 10.2 H8.5" stroke="#2e2e2e" stroke-width="1.1" fill="none"/></svg>
 <svg style="left:114px;top:8px" width="11" height="12" viewBox="0 0 11 12"><path d="M1 0.8 H3.5 V11.2 H1 M10 0.8 H7.5 V11.2 H10" stroke="#5e5e5e" stroke-width="1.1" fill="none"/></svg>
 <svg style="left:144px;top:8px" width="10" height="12" viewBox="0 0 10 12"><path d="M8 0.8 H5 V11.2 H8" stroke="#5e5e5e" stroke-width="1.1" fill="none"/><path d="M2 1 V11" stroke="#333" stroke-width="1" stroke-dasharray="1.5 1.5"/></svg>
 <svg style="left:171px;top:8px" width="10" height="12" viewBox="0 0 10 12"><path d="M2 0.8 H5 V11.2 H2" stroke="#5e5e5e" stroke-width="1.1" fill="none"/><path d="M8 1 V11" stroke="#333" stroke-width="1" stroke-dasharray="1.5 1.5"/></svg>
 <svg style="left:199px;top:8px" width="11" height="12" viewBox="0 0 11 12"><path d="M0.5 2.8 H10.5 M3.5 2.8 V0.8 H7.5 V2.8 M1.8 2.8 L2.6 11.2 H8.4 L9.2 2.8 M4.3 5 V9 M6.7 5 V9" stroke="#5e5e5e" stroke-width="1.1" fill="none"/></svg>
 <svg style="left:229px;top:8px" width="10" height="12" viewBox="0 0 10 12"><path d="M0.8 0.8 H9.2 V8 L5 11.2 L0.8 8Z" stroke="#5e5e5e" stroke-width="1.1" fill="none" stroke-linejoin="round"/></svg>
 <!-- right toolbar -->
 <svg style="left:762px;top:10px" width="10" height="7" viewBox="0 0 10 7"><path d="M0.5 3.5 L3 1 L5 4 L7 1.5 L9.5 5" stroke="#0a4246" stroke-width="1.2" fill="none"/></svg>
 <svg style="left:776px;top:12px" width="7" height="4" viewBox="0 0 7 4"><path d="M0.5 0.5 L3.5 3.2 L6.5 0.5" stroke="#5e5e5e" stroke-width="1.1" fill="none"/></svg>
 <svg style="left:795px;top:8px" width="14" height="13" viewBox="0 0 14 13"><path d="M5 1 H0.8 V9.5 H5 M7 0 V11 M9 1 H13 V5" stroke="#5e5e5e" stroke-width="1.1" fill="none"/><path d="M9.5 6.5 L13.5 9 L11.5 9.5 L12.5 12" stroke="#5e5e5e" stroke-width="1" fill="none"/></svg>
 <svg style="left:815px;top:12px" width="7" height="4" viewBox="0 0 7 4"><path d="M0.5 0.5 L3.5 3.2 L6.5 0.5" stroke="#5e5e5e" stroke-width="1.1" fill="none"/></svg>
 <div class="a" style="left:834px;top:5px;width:1px;height:17px;background:#1a1a1a"></div>
 <svg style="left:845px;top:9px" width="15" height="11" viewBox="0 0 15 11"><path d="M0.8 1 H14.2 V6.5 H0.8Z M4 1 V3 M7.5 1 V3 M11 1 V3" stroke="#5e5e5e" stroke-width="1.1" fill="none"/><circle cx="7.5" cy="8.3" r="2" stroke="#5e5e5e" stroke-width="1" fill="#0e0e0e"/></svg>
 <svg style="left:875px;top:8px" width="12" height="12" viewBox="0 0 12 12"><circle cx="5.5" cy="5.5" r="4.7" stroke="#5e5e5e" stroke-width="1.1" fill="none"/><path d="M3.5 5.5 H7.5 M9 9 L11.5 11.5" stroke="#5e5e5e" stroke-width="1.1"/></svg>
 <div class="a" style="left:901px;top:13.5px;width:76px;height:1px;background:#050505"></div>
 <div class="a" style="left:901px;top:13px;width:18px;height:2px;background:#5a5a5a"></div>
 <div class="a" style="left:915px;top:9px;width:5px;height:10px;background:#6a6a6a;border-radius:2px"></div>
 <svg style="left:991px;top:8px" width="12" height="12" viewBox="0 0 12 12"><circle cx="5.5" cy="5.5" r="4.7" stroke="#5e5e5e" stroke-width="1.1" fill="none"/><path d="M3.5 5.5 H7.5 M5.5 3.5 V7.5 M9 9 L11.5 11.5" stroke="#5e5e5e" stroke-width="1.1"/></svg>
 <!-- ruler -->
 <div class="a" style="left:180.8px;top:30px;width:1px;height:3px;background:#202020"></div><div class="a" style="left:201.7px;top:30px;width:1px;height:3px;background:#202020"></div><div class="a" style="left:222.6px;top:30px;width:1px;height:3px;background:#202020"></div><div class="a" style="left:243.5px;top:30px;width:1px;height:3px;background:#202020"></div><div class="a" style="left:285.3px;top:30px;width:1px;height:3px;background:#202020"></div><div class="a" style="left:306.2px;top:30px;width:1px;height:3px;background:#202020"></div><div class="a" style="left:327.1px;top:30px;width:1px;height:3px;background:#202020"></div><div class="a" style="left:348.0px;top:30px;width:1px;height:3px;background:#202020"></div><div class="a" style="left:368.9px;top:30px;width:1px;height:3px;background:#202020"></div><div class="a" style="left:410.7px;top:30px;width:1px;height:3px;background:#202020"></div><div class="a" style="left:431.6px;top:30px;width:1px;height:3px;background:#202020"></div><div class="a" style="left:452.5px;top:30px;width:1px;height:3px;background:#202020"></div><div class="a" style="left:473.4px;top:30px;width:1px;height:3px;background:#202020"></div><div class="a" style="left:494.3px;top:30px;width:1px;height:3px;background:#202020"></div><div class="a" style="left:536.1px;top:30px;width:1px;height:3px;background:#202020"></div><div class="a" style="left:557.0px;top:30px;width:1px;height:3px;background:#202020"></div><div class="a" style="left:577.9px;top:30px;width:1px;height:3px;background:#202020"></div><div class="a" style="left:598.8px;top:30px;width:1px;height:3px;background:#202020"></div><div class="a" style="left:619.7px;top:30px;width:1px;height:3px;background:#202020"></div><div class="a" style="left:661.5px;top:30px;width:1px;height:3px;background:#202020"></div><div class="a" style="left:682.4px;top:30px;width:1px;height:3px;background:#202020"></div><div class="a" style="left:703.3px;top:30px;width:1px;height:3px;background:#202020"></div><div class="a" style="left:724.2px;top:30px;width:1px;height:3px;background:#202020"></div><div class="a" style="left:745.1px;top:30px;width:1px;height:3px;background:#202020"></div><div class="a" style="left:807.8px;top:30px;width:1px;height:3px;background:#202020"></div><div class="a" style="left:828.7px;top:30px;width:1px;height:3px;background:#202020"></div><div class="a" style="left:849.6px;top:30px;width:1px;height:3px;background:#202020"></div><div class="a" style="left:870.5px;top:30px;width:1px;height:3px;background:#202020"></div><div class="a" style="left:912.3px;top:30px;width:1px;height:3px;background:#202020"></div><div class="a" style="left:933.2px;top:30px;width:1px;height:3px;background:#202020"></div><div class="a" style="left:995.9px;top:30px;width:1px;height:3px;background:#202020"></div>
 <div class="t" style="left:144px;top:31px;font-size:7.5px;color:#2e2e2e">00:00</div>
 <div class="t" style="left:766px;top:31px;font-size:7.5px;color:#2e2e2e">00:05</div>
 <div class="a" style="left:968px;top:30px;width:1px;height:9px;background:#2a2a2a"></div>
 <div class="t" style="left:972px;top:31px;font-size:7.5px;color:#2e2e2e">00:08</div>
 <div class="a" style="left:98px;top:28px;width:1px;height:290px;background:#0a0a0a"></div>
 <!-- track band -->
 <div class="a" style="left:0;top:147px;width:1003px;height:62px;background:#131313"></div>
 <svg style="left:6px;top:174px" width="10" height="9" viewBox="0 0 10 9"><rect x="0.5" y="0.5" width="9" height="8" stroke="#3a3a3a" fill="none"/><path d="M3.5 4.5 H6" stroke="#3a3a3a"/></svg>
 <svg style="left:26px;top:173px" width="8" height="10" viewBox="0 0 8 10"><path d="M1.8 4.5 V2.8 A2.2 2.2 0 0 1 6.2 2.8 V4.5" stroke="#555" stroke-width="1.1" fill="none"/><rect x="0.5" y="4.5" width="7" height="5" rx="1" fill="#555"/></svg>
 <svg style="left:44px;top:175px" width="11" height="7" viewBox="0 0 11 7"><ellipse cx="5.5" cy="3.5" rx="5" ry="3" fill="#3e3e3e"/><circle cx="5.5" cy="3.5" r="1.5" fill="#111"/></svg>
 <svg style="left:64px;top:174px" width="10" height="9" viewBox="0 0 10 9"><path d="M0.5 3 H2.5 L5 0.8 V8.2 L2.5 6 H0.5Z" stroke="#4a4a4a" fill="none"/><path d="M7 2.5 Q8 4.5 7 6.5 M8.5 1.5 V7.5" stroke="#4a4a4a" fill="none"/></svg>
 <svg style="left:83px;top:178px" width="10" height="2" viewBox="0 0 10 2"><circle cx="1" cy="1" r="0.8" fill="#3a3a3a"/><circle cx="5" cy="1" r="0.8" fill="#3a3a3a"/><circle cx="9" cy="1" r="0.8" fill="#3a3a3a"/></svg>
 <div class="a" style="left:102px;top:164px;width:31px;height:30px;background:#151515;border-radius:4px"></div>
 <svg style="left:113px;top:167px" width="9" height="10" viewBox="0 0 9 10"><path d="M1 8 L1.5 6 L6 1.5 L7.5 3 L3 7.5Z M0.5 9.5 H8.5" stroke="#555" stroke-width="1" fill="none"/></svg>
 <div class="t" style="left:106px;top:181.5px;font-size:8.3px;color:#4a4a4a">Cover</div>
 <!-- clip -->
 <div class="a" style="left:138px;top:150px;width:314px;height:58px;border:1.3px solid #707270;border-radius:3px;background:#032a2a;overflow:hidden">
  <div class="a" style="left:0;top:0;width:314px;height:14px;background:#06302f"></div>
  <div class="a" style="left:0;top:13px;width:314px;height:30.5px;background:#6a6b60"></div>
 </div>
 <svg style="left:143.5px;top:151px" width="10" height="10" viewBox="0 0 10 10"><path d="M5 0.3 L6.3 3.7 L9.7 5 L6.3 6.3 L5 9.7 L3.7 6.3 L0.3 5 L3.7 3.7Z" fill="#3e7878"/><path d="M5 3.6 L6.4 5 L5 6.4 L3.6 5Z" fill="#06302f"/></svg>
 <div class="t" style="left:157px;top:153.5px;font-size:8.3px;color:#2e6a6a">AI media</div>
 <div class="t" style="left:196px;top:153.5px;font-size:8.3px;color:#2e6a6a">00:00:03:00</div>
 <!-- playhead -->
 <div class="a" style="left:139px;top:33px;width:1px;height:271px;background:#6a6a6a"></div>
 <svg style="left:134.5px;top:27.5px" width="10" height="12" viewBox="0 0 10 12"><path d="M1 1 H9 V7.5 L5 11 L1 7.5Z" stroke="#8a8a8a" stroke-width="1.3" fill="#0e0e0e" stroke-linejoin="round"/></svg>
 <!-- scrollbar -->
 <div class="a" style="left:100px;top:308px;width:903px;height:5px;background:#171717;border-radius:3px"></div>
</div>

<!-- MODAL -->
<svg style="left:145px;top:571px;z-index:1" width="313" height="30" viewBox="0 0 313 30"><defs><symbol id="flw" viewBox="0 0 255 144"><defs><path id="arc3" d="M82.5 60.6 A58.8 58.8 0 0 1 172.5 60.6"/></defs><text font-family="Liberation Serif" font-weight="bold" font-size="11.9" fill="#161616" text-anchor="middle"><textPath href="#arc3" startOffset="50%">Bloom &amp; Grace</textPath></text><g transform="translate(4.5,3.5)" fill="#e3dfc2"><path d="M85.5 89.5 C99 89 114 92 127.5 108 L127.5 110.5 C116 107.5 101 104.5 94 100.5 C90 97.5 87 93.5 85.5 89.5Z"/><path d="M 171.50 89.50 C 158.00 89.00 143.00 92.00 129.50 108.00 L 129.50 110.50 C 141.00 107.50 156.00 104.50 163.00 100.50 C 167.00 97.50 170.00 93.50 171.50 89.50 Z"/><path d="M127.5 104 C119 101 113.5 93 115 85 C123 87 128.5 95 127.5 104Z"/><path d="M 129.50 104.00 C 138.00 101.00 143.50 93.00 142.00 85.00 C 134.00 87.00 128.50 95.00 129.50 104.00 Z"/><path d="M128.5 81 C117 90 98 92 89.5 86 C84.5 81.5 85 73.5 91 72 C98 70.5 104 76 110 78 C117 80 124 78 128.5 74Z"/><path d="M 128.50 81.00 C 140.00 90.00 159.00 92.00 167.50 86.00 C 172.50 81.50 172.00 73.50 166.00 72.00 C 159.00 70.50 153.00 76.00 147.00 78.00 C 140.00 80.00 133.00 78.00 128.50 74.00 Z"/><path d="M128.5 78 C117 80 100.5 78 95 70 C91.5 64.5 95 60.5 101 62 C108 64 113 70 119 72.5 C123 74 126 73 128.5 71Z"/><path d="M 128.50 78.00 C 140.00 80.00 156.50 78.00 162.00 70.00 C 165.50 64.50 162.00 60.50 156.00 62.00 C 149.00 64.00 144.00 70.00 138.00 72.50 C 134.00 74.00 131.00 73.00 128.50 71.00 Z"/><path d="M128 78 C116 74 105.5 66 105.5 56.5 C105.5 50 111 48 115.5 50.5 C121.5 54 124.5 63 128 71Z"/><path d="M 129.00 78.00 C 141.00 74.00 151.50 66.00 151.50 56.50 C 151.50 50.00 146.00 48.00 141.50 50.50 C 135.50 54.00 132.50 63.00 129.00 71.00 Z"/><path d="M116 54 C115 48 119 45.5 123 46 C127 45.5 130 48 129 52 L124 58Z"/><path d="M128 52 C128 47 132 45.5 135.5 46 C139 46.5 141 50 140 54 L134 58Z"/><path d="M128 78 C120 71.5 115.5 62 117 55 C118 51 121.5 51 123.5 54 C126 59 127 67 128.5 73Z"/><path d="M 129.00 78.00 C 137.00 71.50 141.50 62.00 140.00 55.00 C 139.00 51.00 135.50 51.00 133.50 54.00 C 131.00 59.00 130.00 67.00 128.50 73.00 Z"/><path d="M129.5 81 C121 80.5 119 72 120 66 C121 59 125 56 129.5 56 C134 56 138 59 139 66 C140 72 138 80.5 129.5 81Z"/><path d="M124 100 L137 100 L133 118Z"/></g><path d="M85.5 89.5 C99 89 114 92 127.5 108 L127.5 110.5 C116 107.5 101 104.5 94 100.5 C90 97.5 87 93.5 85.5 89.5Z" fill="#a6d19c" stroke="#95b888" stroke-width="0.6" stroke-linejoin="round"/><path d="M 171.50 89.50 C 158.00 89.00 143.00 92.00 129.50 108.00 L 129.50 110.50 C 141.00 107.50 156.00 104.50 163.00 100.50 C 167.00 97.50 170.00 93.50 171.50 89.50 Z" fill="#a6d19c" stroke="#95b888" stroke-width="0.6" stroke-linejoin="round"/><path d="M127.5 104 C119 101 113.5 93 115 85 C123 87 128.5 95 127.5 104Z" fill="#9cca96" stroke="#95b888" stroke-width="0.6" stroke-linejoin="round"/><path d="M 129.50 104.00 C 138.00 101.00 143.50 93.00 142.00 85.00 C 134.00 87.00 128.50 95.00 129.50 104.00 Z" fill="#9cca96" stroke="#95b888" stroke-width="0.6" stroke-linejoin="round"/><path d="M128.5 70 C128.5 88 128.5 102 127 115" stroke="#9e9c74" stroke-width="0.9" fill="none"/><path d="M92 92.5 C104 95 116 100 126 107.5 M165 92.5 C153 95 141 100 131 107.5" stroke="#c8dfb6" stroke-width="0.7" fill="none"/><path d="M128.5 81 C117 90 98 92 89.5 86 C84.5 81.5 85 73.5 91 72 C98 70.5 104 76 110 78 C117 80 124 78 128.5 74Z" fill="#f4f1c2" stroke="#b39c72" stroke-width="0.9" stroke-linejoin="round"/><path d="M 128.50 81.00 C 140.00 90.00 159.00 92.00 167.50 86.00 C 172.50 81.50 172.00 73.50 166.00 72.00 C 159.00 70.50 153.00 76.00 147.00 78.00 C 140.00 80.00 133.00 78.00 128.50 74.00 Z" fill="#f4f1c2" stroke="#b39c72" stroke-width="0.9" stroke-linejoin="round"/><path d="M128.5 78 C117 80 100.5 78 95 70 C91.5 64.5 95 60.5 101 62 C108 64 113 70 119 72.5 C123 74 126 73 128.5 71Z" fill="#f4d8be" stroke="#b39c72" stroke-width="0.9" stroke-linejoin="round"/><path d="M 128.50 78.00 C 140.00 80.00 156.50 78.00 162.00 70.00 C 165.50 64.50 162.00 60.50 156.00 62.00 C 149.00 64.00 144.00 70.00 138.00 72.50 C 134.00 74.00 131.00 73.00 128.50 71.00 Z" fill="#f4d8be" stroke="#b39c72" stroke-width="0.9" stroke-linejoin="round"/><path d="M128 78 C116 74 105.5 66 105.5 56.5 C105.5 50 111 48 115.5 50.5 C121.5 54 124.5 63 128 71Z" fill="#f4c8b3" stroke="#b39c72" stroke-width="0.9" stroke-linejoin="round"/><path d="M 129.00 78.00 C 141.00 74.00 151.50 66.00 151.50 56.50 C 151.50 50.00 146.00 48.00 141.50 50.50 C 135.50 54.00 132.50 63.00 129.00 71.00 Z" fill="#f4c8b3" stroke="#b39c72" stroke-width="0.9" stroke-linejoin="round"/><path d="M116 54 C115 48 119 45.5 123 46 C127 45.5 130 48 129 52 L124 58Z" fill="#f5cbb6" stroke="#b39c72" stroke-width="0.85" stroke-linejoin="round"/><path d="M128 52 C128 47 132 45.5 135.5 46 C139 46.5 141 50 140 54 L134 58Z" fill="#f7f3c8" stroke="#b39c72" stroke-width="0.85" stroke-linejoin="round"/><path d="M128 78 C120 71.5 115.5 62 117 55 C118 51 121.5 51 123.5 54 C126 59 127 67 128.5 73Z" fill="#f3cbb6" stroke="#b39c72" stroke-width="0.85" stroke-linejoin="round"/><path d="M 129.00 78.00 C 137.00 71.50 141.50 62.00 140.00 55.00 C 139.00 51.00 135.50 51.00 133.50 54.00 C 131.00 59.00 130.00 67.00 128.50 73.00 Z" fill="#f3cbb6" stroke="#b39c72" stroke-width="0.85" stroke-linejoin="round"/><path d="M129.5 81 C121 80.5 119 72 120 66 C121 59 125 56 129.5 56 C134 56 138 59 139 66 C140 72 138 80.5 129.5 81Z" fill="#faf6ca" stroke="#b39c72" stroke-width="0.9" stroke-linejoin="round"/></symbol><clipPath id="tc"><rect x="0" y="0" width="313" height="30"/></clipPath></defs><rect x="0" y="0" width="313" height="30" fill="#fdfde2"/><g clip-path="url(#tc)"><use href="#flw" x="-5.23" y="-1.20" width="54.82" height="30.96"/><use href="#flw" x="35.07" y="-1.20" width="54.82" height="30.96"/><use href="#flw" x="75.37" y="-1.20" width="54.82" height="30.96"/><use href="#flw" x="115.67" y="-1.20" width="54.82" height="30.96"/><use href="#flw" x="155.97" y="-1.20" width="54.82" height="30.96"/><use href="#flw" x="196.27" y="-1.20" width="54.82" height="30.96"/><use href="#flw" x="236.57" y="-1.20" width="54.82" height="30.96"/><use href="#flw" x="276.87" y="-1.20" width="54.82" height="30.96"/></g><rect x="0" y="0" width="313" height="30" fill="rgba(0,0,0,0.575)"/></svg>
<div id="modal" class="a" style="left:256px;top:242.5px;width:512px;height:243.5px;background:#262626;border-radius:7px;overflow:hidden;box-shadow:0 3px 10px rgba(0,0,0,0.55)">
 <div class="t" style="left:6.5px;top:10.5px;font-size:8.6px;font-weight:bold;color:#d2d2d2;-webkit-text-stroke:0">Export still frames</div>
 <div class="a" style="left:0;top:28px;width:512px;height:1px;background:#2b2b2b"></div>
 <div class="a" style="left:13px;top:42.5px;width:256px;height:144px;background:#fdfde0;border-radius:6px;overflow:hidden"><svg width="256" height="144" viewBox="0 0 255 144" preserveAspectRatio="none" style="left:0;top:0"><defs><path id="arc" d="M82.5 60.6 A58.8 58.8 0 0 1 172.5 60.6"/></defs><text font-family="Liberation Serif" font-weight="bold" font-size="11.9" fill="#161616" text-anchor="middle"><textPath href="#arc" startOffset="50%">Bloom &amp; Grace</textPath></text><g transform="translate(4.5,3.5)" fill="#e3dfc2"><path d="M85.5 89.5 C99 89 114 92 127.5 108 L127.5 110.5 C116 107.5 101 104.5 94 100.5 C90 97.5 87 93.5 85.5 89.5Z"/><path d="M 171.50 89.50 C 158.00 89.00 143.00 92.00 129.50 108.00 L 129.50 110.50 C 141.00 107.50 156.00 104.50 163.00 100.50 C 167.00 97.50 170.00 93.50 171.50 89.50 Z"/><path d="M127.5 104 C119 101 113.5 93 115 85 C123 87 128.5 95 127.5 104Z"/><path d="M 129.50 104.00 C 138.00 101.00 143.50 93.00 142.00 85.00 C 134.00 87.00 128.50 95.00 129.50 104.00 Z"/><path d="M128.5 81 C117 90 98 92 89.5 86 C84.5 81.5 85 73.5 91 72 C98 70.5 104 76 110 78 C117 80 124 78 128.5 74Z"/><path d="M 128.50 81.00 C 140.00 90.00 159.00 92.00 167.50 86.00 C 172.50 81.50 172.00 73.50 166.00 72.00 C 159.00 70.50 153.00 76.00 147.00 78.00 C 140.00 80.00 133.00 78.00 128.50 74.00 Z"/><path d="M128.5 78 C117 80 100.5 78 95 70 C91.5 64.5 95 60.5 101 62 C108 64 113 70 119 72.5 C123 74 126 73 128.5 71Z"/><path d="M 128.50 78.00 C 140.00 80.00 156.50 78.00 162.00 70.00 C 165.50 64.50 162.00 60.50 156.00 62.00 C 149.00 64.00 144.00 70.00 138.00 72.50 C 134.00 74.00 131.00 73.00 128.50 71.00 Z"/><path d="M128 78 C116 74 105.5 66 105.5 56.5 C105.5 50 111 48 115.5 50.5 C121.5 54 124.5 63 128 71Z"/><path d="M 129.00 78.00 C 141.00 74.00 151.50 66.00 151.50 56.50 C 151.50 50.00 146.00 48.00 141.50 50.50 C 135.50 54.00 132.50 63.00 129.00 71.00 Z"/><path d="M116 54 C115 48 119 45.5 123 46 C127 45.5 130 48 129 52 L124 58Z"/><path d="M128 52 C128 47 132 45.5 135.5 46 C139 46.5 141 50 140 54 L134 58Z"/><path d="M128 78 C120 71.5 115.5 62 117 55 C118 51 121.5 51 123.5 54 C126 59 127 67 128.5 73Z"/><path d="M 129.00 78.00 C 137.00 71.50 141.50 62.00 140.00 55.00 C 139.00 51.00 135.50 51.00 133.50 54.00 C 131.00 59.00 130.00 67.00 128.50 73.00 Z"/><path d="M129.5 81 C121 80.5 119 72 120 66 C121 59 125 56 129.5 56 C134 56 138 59 139 66 C140 72 138 80.5 129.5 81Z"/><path d="M124 100 L137 100 L133 118Z"/></g><path d="M85.5 89.5 C99 89 114 92 127.5 108 L127.5 110.5 C116 107.5 101 104.5 94 100.5 C90 97.5 87 93.5 85.5 89.5Z" fill="#a6d19c" stroke="#95b888" stroke-width="0.6" stroke-linejoin="round"/><path d="M 171.50 89.50 C 158.00 89.00 143.00 92.00 129.50 108.00 L 129.50 110.50 C 141.00 107.50 156.00 104.50 163.00 100.50 C 167.00 97.50 170.00 93.50 171.50 89.50 Z" fill="#a6d19c" stroke="#95b888" stroke-width="0.6" stroke-linejoin="round"/><path d="M127.5 104 C119 101 113.5 93 115 85 C123 87 128.5 95 127.5 104Z" fill="#9cca96" stroke="#95b888" stroke-width="0.6" stroke-linejoin="round"/><path d="M 129.50 104.00 C 138.00 101.00 143.50 93.00 142.00 85.00 C 134.00 87.00 128.50 95.00 129.50 104.00 Z" fill="#9cca96" stroke="#95b888" stroke-width="0.6" stroke-linejoin="round"/><path d="M128.5 70 C128.5 88 128.5 102 127 115" stroke="#9e9c74" stroke-width="0.9" fill="none"/><path d="M92 92.5 C104 95 116 100 126 107.5 M165 92.5 C153 95 141 100 131 107.5" stroke="#c8dfb6" stroke-width="0.7" fill="none"/><path d="M128.5 81 C117 90 98 92 89.5 86 C84.5 81.5 85 73.5 91 72 C98 70.5 104 76 110 78 C117 80 124 78 128.5 74Z" fill="#f4f1c2" stroke="#b39c72" stroke-width="0.9" stroke-linejoin="round"/><path d="M 128.50 81.00 C 140.00 90.00 159.00 92.00 167.50 86.00 C 172.50 81.50 172.00 73.50 166.00 72.00 C 159.00 70.50 153.00 76.00 147.00 78.00 C 140.00 80.00 133.00 78.00 128.50 74.00 Z" fill="#f4f1c2" stroke="#b39c72" stroke-width="0.9" stroke-linejoin="round"/><path d="M128.5 78 C117 80 100.5 78 95 70 C91.5 64.5 95 60.5 101 62 C108 64 113 70 119 72.5 C123 74 126 73 128.5 71Z" fill="#f4d8be" stroke="#b39c72" stroke-width="0.9" stroke-linejoin="round"/><path d="M 128.50 78.00 C 140.00 80.00 156.50 78.00 162.00 70.00 C 165.50 64.50 162.00 60.50 156.00 62.00 C 149.00 64.00 144.00 70.00 138.00 72.50 C 134.00 74.00 131.00 73.00 128.50 71.00 Z" fill="#f4d8be" stroke="#b39c72" stroke-width="0.9" stroke-linejoin="round"/><path d="M128 78 C116 74 105.5 66 105.5 56.5 C105.5 50 111 48 115.5 50.5 C121.5 54 124.5 63 128 71Z" fill="#f4c8b3" stroke="#b39c72" stroke-width="0.9" stroke-linejoin="round"/><path d="M 129.00 78.00 C 141.00 74.00 151.50 66.00 151.50 56.50 C 151.50 50.00 146.00 48.00 141.50 50.50 C 135.50 54.00 132.50 63.00 129.00 71.00 Z" fill="#f4c8b3" stroke="#b39c72" stroke-width="0.9" stroke-linejoin="round"/><path d="M116 54 C115 48 119 45.5 123 46 C127 45.5 130 48 129 52 L124 58Z" fill="#f5cbb6" stroke="#b39c72" stroke-width="0.85" stroke-linejoin="round"/><path d="M128 52 C128 47 132 45.5 135.5 46 C139 46.5 141 50 140 54 L134 58Z" fill="#f7f3c8" stroke="#b39c72" stroke-width="0.85" stroke-linejoin="round"/><path d="M128 78 C120 71.5 115.5 62 117 55 C118 51 121.5 51 123.5 54 C126 59 127 67 128.5 73Z" fill="#f3cbb6" stroke="#b39c72" stroke-width="0.85" stroke-linejoin="round"/><path d="M 129.00 78.00 C 137.00 71.50 141.50 62.00 140.00 55.00 C 139.00 51.00 135.50 51.00 133.50 54.00 C 131.00 59.00 130.00 67.00 128.50 73.00 Z" fill="#f3cbb6" stroke="#b39c72" stroke-width="0.85" stroke-linejoin="round"/><path d="M129.5 81 C121 80.5 119 72 120 66 C121 59 125 56 129.5 56 C134 56 138 59 139 66 C140 72 138 80.5 129.5 81Z" fill="#faf6ca" stroke="#b39c72" stroke-width="0.9" stroke-linejoin="round"/></svg></div>
 <div class="t" style="left:288px;top:47px;font-size:9px;color:#cdcdcd">Name</div>
 <div class="t" style="left:288px;top:77.5px;font-size:9px;color:#cdcdcd">Export to</div>
 <div class="t" style="left:288px;top:108px;font-size:9px;color:#cdcdcd">Resolution</div>
 <div class="t" style="left:288px;top:138.5px;font-size:9px;color:#cdcdcd">Format</div>
 <div class="t" style="left:288px;top:169px;font-size:9px;color:#cdcdcd">Import project</div>
 <!-- mosaic -->
 <div class="a" style="left:475.5px;top:42.5px;width:23px;height:16.5px;background:#1e1e1e"></div>
 <div class="a" style="left:385.3px;top:50.2px;width:19.1px;height:20.3px;background:#2d2d2d"></div>
 <div class="a" style="left:404.4px;top:50.2px;width:20.3px;height:20.3px;background:#343434"></div>
 <div class="a" style="left:424.7px;top:50.2px;width:50.8px;height:20.3px;background:#1c1c1c"></div>
 <div class="a" style="left:475.5px;top:59px;width:23px;height:11.5px;background:#232323"></div>
 <div class="a" style="left:385.3px;top:70.5px;width:19.1px;height:19.7px;background:#2c2c2c"></div>
 <div class="a" style="left:404.4px;top:70.5px;width:59px;height:19.7px;background:#474747"></div>
 <div class="a" style="left:463.4px;top:70.5px;width:12.1px;height:19.7px;background:#3d3d3d"></div>
 <div class="a" style="left:475.5px;top:70.5px;width:6px;height:19.7px;background:#2e2e2e"></div>
 <div class="a" style="left:481px;top:73px;width:18px;height:16.5px;background:#474747;border-radius:3px"></div>
 <svg style="left:485px;top:77.5px" width="10" height="8" viewBox="0 0 10 8"><path d="M0.7 0.7 H4 L5 1.8 H9.3 V7.3 H0.7Z M0.7 3 H9.3" stroke="#f0f0f0" stroke-width="1.1" fill="none" stroke-linejoin="round"/></svg>
 <div class="a" style="left:384px;top:103.5px;width:115px;height:17px;background:#3a3a3a;border-radius:3.5px"></div>
 <div class="t" style="left:390.5px;top:108px;font-size:9px;color:#d0d0d0">8K</div>
 <svg style="left:488.5px;top:110.5px" width="7" height="4" viewBox="0 0 7 4"><path d="M0.7 0.7 L3.5 3.2 L6.3 0.7" stroke="#e6e6e6" stroke-width="1.3" fill="none"/></svg>
 <div class="a" style="left:384px;top:134px;width:115px;height:17px;background:#3a3a3a;border-radius:3.5px"></div>
 <div class="t" style="left:390.5px;top:138.5px;font-size:9px;color:#d0d0d0">PNG</div>
 <svg style="left:488.5px;top:141px" width="7" height="4" viewBox="0 0 7 4"><path d="M0.7 0.7 L3.5 3.2 L6.3 0.7" stroke="#e6e6e6" stroke-width="1.3" fill="none"/></svg>
 <div class="a" style="left:469.7px;top:164px;width:29.8px;height:13.3px;background:#17b6c6;border-radius:7px"></div>
 <div class="a" style="left:489px;top:167px;width:7.5px;height:7.5px;background:#f2fbfc;border-radius:50%"></div>
 <div class="a" style="left:377.4px;top:213.5px;width:58px;height:17.6px;background:#17b5c5;border-radius:4px"></div>
 <div class="t" style="left:377.4px;top:218.5px;width:58px;text-align:center;font-size:8.6px;font-weight:bold;color:#e6f6f8;-webkit-text-stroke:0">Export</div>
 <div class="a" style="left:441.5px;top:213.5px;width:57.2px;height:17.6px;background:#4e4e4e;border-radius:4px"></div>
 <div class="t" style="left:441.5px;top:218.5px;width:57.2px;text-align:center;font-size:8.6px;font-weight:bold;color:#dedede;-webkit-text-stroke:0">Cancel</div>
</div>
<div class="a" style="left:531px;top:257.5px;width:237px;height:228.5px;border:3.5px solid #e3534c;border-radius:5px"></div>
</div></body></html>
